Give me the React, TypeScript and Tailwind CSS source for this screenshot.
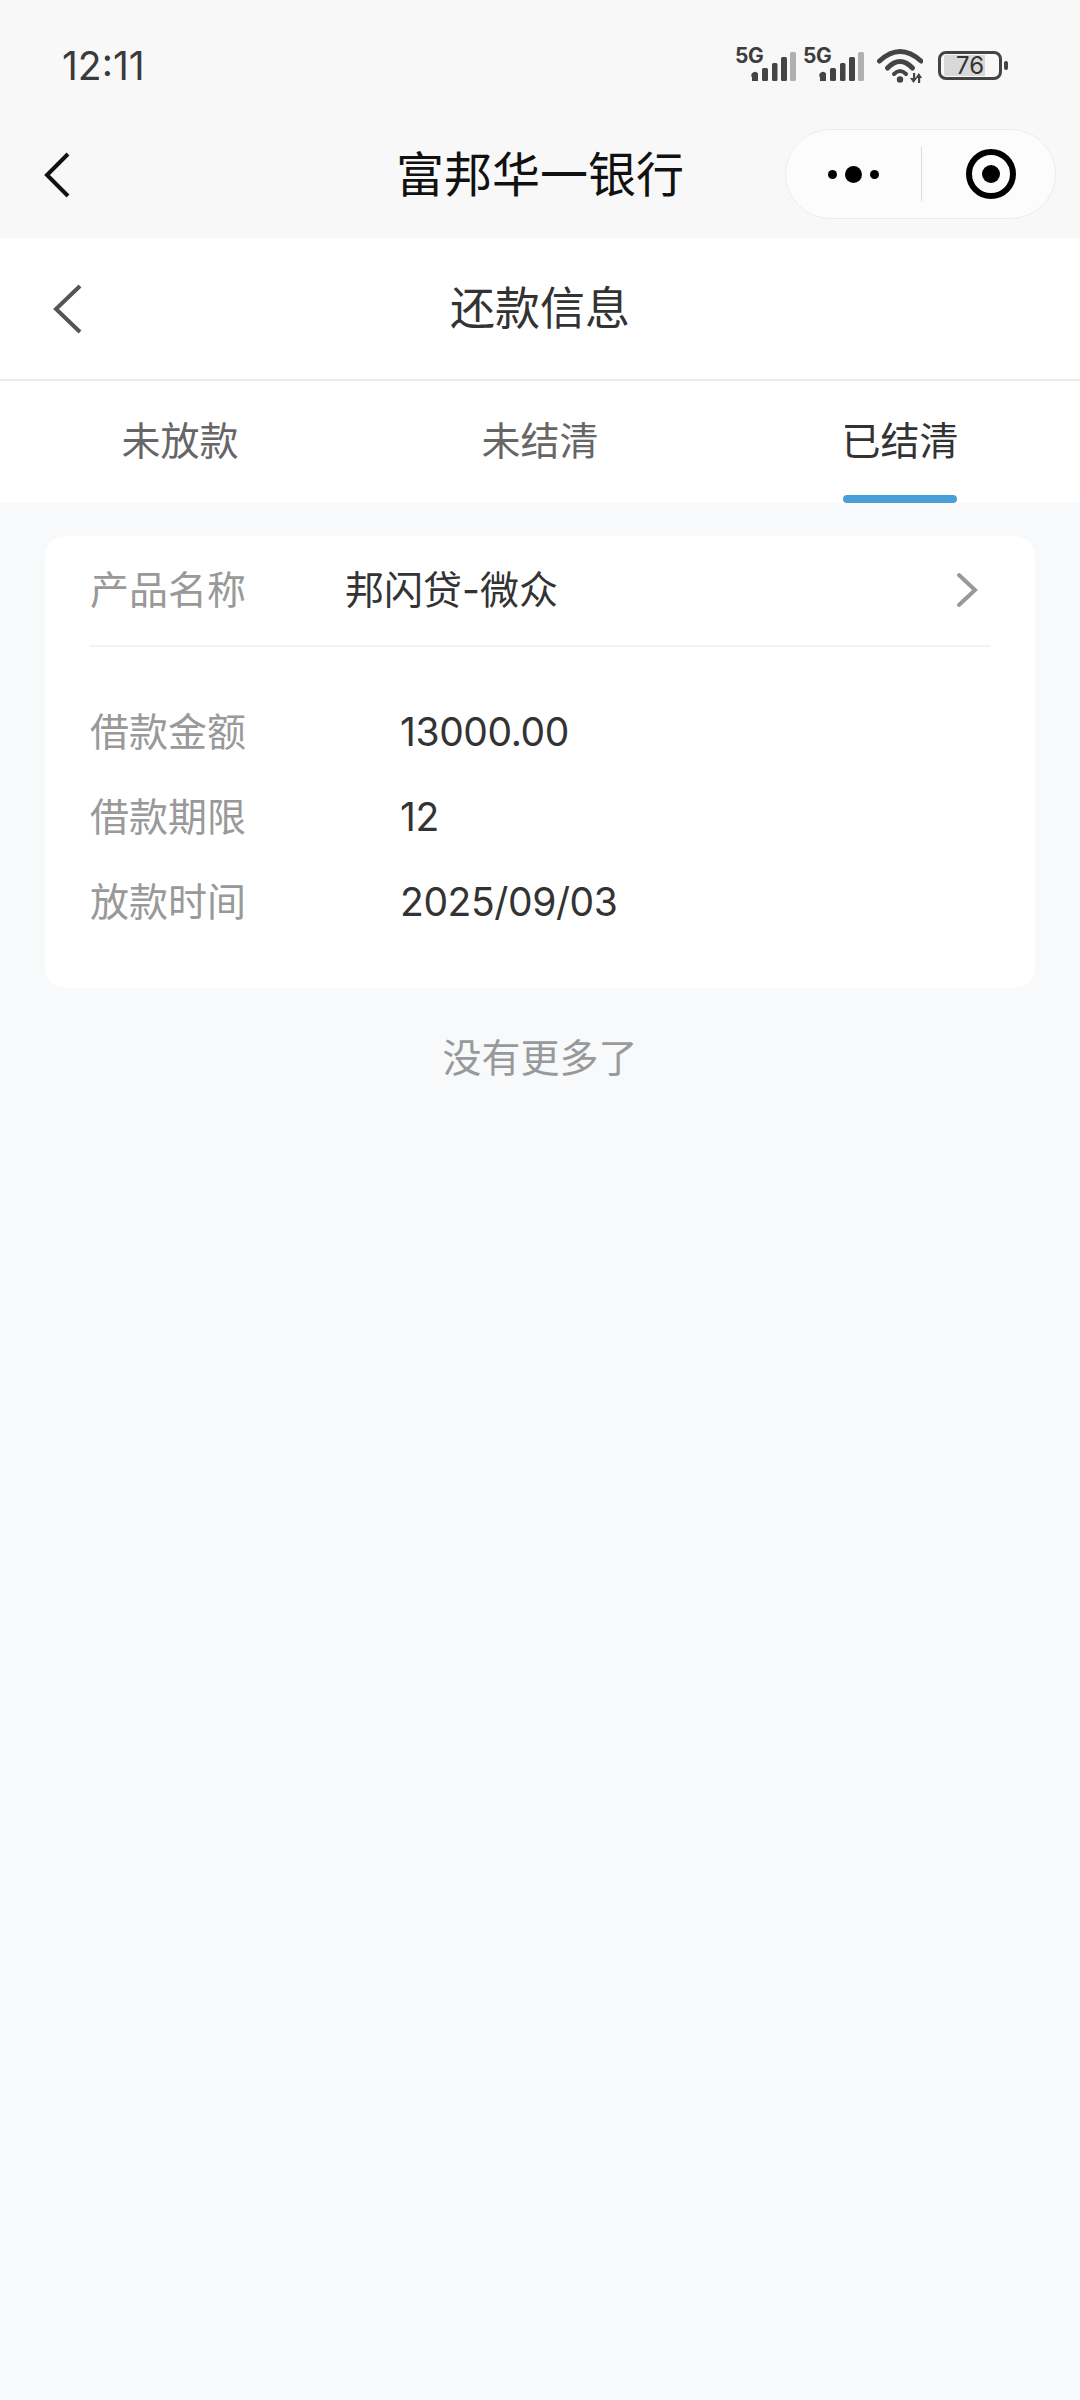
const font = { fontFamily: '"Inter", "Noto Sans CJK SC", sans-serif' };

function Signal() {
  return (
    <svg className="mt-[-10px]" width="61" height="44" viewBox="0 -10 61 44">
      <text x="0" y="15.5" fontSize="21" fontWeight="700" fill="#3d3d3d" fontFamily="Inter, sans-serif" letterSpacing="-0.5">5G</text>
      <path d="M17 34v-3.5a3 3 0 0 1 6-4V34z" fill="#444" />
      <rect x="27" y="21" width="6" height="13" rx="1.5" fill="#444" />
      <rect x="37" y="16" width="5.5" height="18" rx="1.5" fill="#444" />
      <rect x="46" y="10" width="6" height="24" rx="1.5" fill="#444" />
      <rect x="55" y="5" width="6" height="29" rx="1.5" fill="#b0b0b0" />
    </svg>
  );
}

function Wifi() {
  return (
    <svg width="46" height="36" viewBox="0 0 46 36">
      <path d="M2.5 14Q23 -5 44 14" fill="none" stroke="#444" strokeWidth="5" strokeLinecap="round" />
      <path d="M10.5 21Q23 8 35.5 21" fill="none" stroke="#444" strokeWidth="5" strokeLinecap="round" />
      <path d="M17 27Q23 21 29 27" fill="none" stroke="#444" strokeWidth="4" strokeLinecap="round" />
      <circle cx="23" cy="32.5" r="3.2" fill="#444" />
      <path d="M36 26h2.2v5h2L36.5 36 33 31h3zM41 36h2.2v-5h2L41.8 26 38.5 31h2.5z" fill="#444" />
    </svg>
  );
}

function Row({ label, value }: { label: string; value: string }) {
  return (
    <div className="flex items-center h-[85px]">
      <span className="w-[355px] pl-[45px] text-[39px] text-[#999] leading-none">{label}</span>
      <span className="text-[39px] text-[#333] leading-none tracking-[-0.4px]">{value}</span>
    </div>
  );
}

export default function App() {
  return (
    <div style={font} className="w-[1080px] h-[2400px] bg-[#f8f9fb] flex flex-col">
      <div className="bg-[#f8f8f8] h-[238px] flex flex-col">
        <div className="h-[130px] flex pt-[44px] pl-[62px] pr-[72px] justify-between">
          <span className="text-[39px] text-[#3a3a3a] leading-[44px]">12:11</span>
          <div className="flex items-start pt-[3px]">
            <Signal />
            <span className="w-[7px]" />
            <Signal />
            <span className="w-[13px]" />
            <Wifi />
            <div className="ml-[15px] mt-[4px] w-[64px] h-[29px] border-[3px] border-[#444] rounded-[8px] flex items-center justify-center bg-[linear-gradient(to_right,#d8d8d8_75%,transparent_75%)] bg-clip-content px-[3px] py-[1px] text-[24px] text-[#333] leading-none">
              76
            </div>
            <span className="ml-[2px] mt-[14px] w-[4px] h-[9px] rounded-sm bg-[#444]" />
          </div>
        </div>
        <div className="flex items-center h-[90px] relative">
          <svg className="ml-[44px]" width="28" height="46" viewBox="0 0 28 46">
            <path d="M24 2L3 23L24 44" fill="none" stroke="#111" strokeWidth="4" />
          </svg>
          <span className="flex-1 text-center text-[48px] text-[#111] leading-none ml-[-72px]">富邦华一银行</span>
          <div className="absolute left-[785px] top-[-1px] w-[271px] h-[90px] rounded-full bg-[#fcfcfc] border border-[#ececec] flex items-center">
            <div className="w-[135px] flex items-center justify-center gap-[8px]">
              <span className="w-[9px] h-[9px] rounded-full bg-black" />
              <span className="w-[17px] h-[17px] rounded-full bg-black" />
              <span className="w-[9px] h-[9px] rounded-full bg-black" />
            </div>
            <div className="w-px h-[54px] bg-[#ddd]" />
            <div className="flex-1 flex justify-center pl-[4px]">
              <div className="w-[50px] h-[50px] rounded-full border-[6px] border-black flex items-center justify-center">
                <span className="w-[18px] h-[18px] rounded-full bg-black" />
              </div>
            </div>
          </div>
        </div>
      </div>

      <div className="bg-white h-[143px] border-b-2 border-[#ececec] flex items-center">
        <svg className="ml-[52px]" width="32" height="50" viewBox="0 0 32 50">
          <path d="M28 2L4 25L28 48" fill="none" stroke="#555" strokeWidth="4" />
        </svg>
        <span className="flex-1 text-center text-[45px] text-[#333] leading-none ml-[-84px]">还款信息</span>
      </div>

      <div className="bg-white h-[122px] flex">
        {["未放款", "未结清", "已结清"].map((tab, i) => (
          <div key={tab} className="flex-1 flex flex-col items-center justify-end">
            <span className={`text-[39px] leading-none mb-[35px] ${i === 2 ? "text-[#333]" : "text-[#666]"}`}>{tab}</span>
            <span className={`w-[114px] h-[8px] rounded-full ${i === 2 ? "bg-[#4a9fd8]" : "bg-transparent"}`} />
          </div>
        ))}
      </div>

      <div className="mx-[45px] mt-[33px] h-[452px] bg-white rounded-[20px] flex flex-col">
        <div className="flex items-center h-[111px] pb-[2px] mx-[45px] border-b-2 border-[#f3f3f3]">
          <span className="w-[255px] text-[39px] text-[#999] leading-none">产品名称</span>
          <span className="flex-1 text-[39px] text-[#333] leading-none">邦闪贷-微众</span>
          <svg className="mr-[12px]" width="22" height="36" viewBox="0 0 22 36">
            <path d="M3 3L19 18L3 33" fill="none" stroke="#999" strokeWidth="4" strokeLinecap="round" />
          </svg>
        </div>
        <div className="pt-[42px] flex flex-col">
          <Row label="借款金额" value="13000.00" />
          <Row label="借款期限" value="12" />
          <Row label="放款时间" value="2025/09/03" />
        </div>
      </div>

      <p className="text-center text-[39px] text-[#999] leading-none mt-[50px]">没有更多了</p>
    </div>
  );
}
